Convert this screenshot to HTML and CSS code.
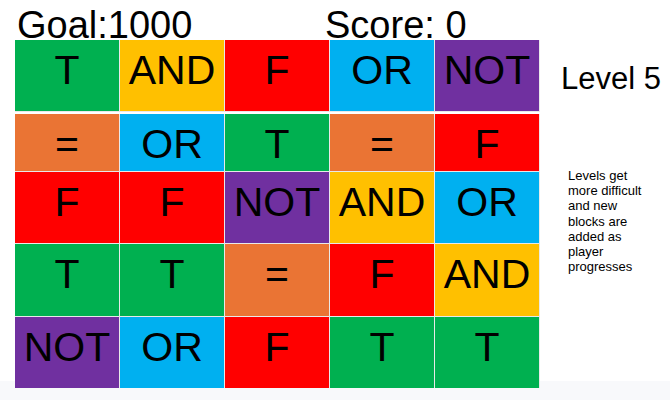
FILE: index.html
```html
<!DOCTYPE html>
<html>
<head>
<meta charset="utf-8">
<link rel="stylesheet" href="styles.css">
</head>
<body>
<div class="slide">
  <header class="header">
    <div class="goal">Goal:1000</div>
    <div class="score">Score: 0</div>
  </header>
  <div class="main">
    <div class="board">
      <div class="grid top-row">
        <div class="cell green">T</div>
        <div class="cell yellow">AND</div>
        <div class="cell red">F</div>
        <div class="cell blue">OR</div>
        <div class="cell purple">NOT</div>
      </div>
      <div class="grid lower">
        <div class="cell orange">=</div>
        <div class="cell blue">OR</div>
        <div class="cell green">T</div>
        <div class="cell orange">=</div>
        <div class="cell red">F</div>

        <div class="cell red">F</div>
        <div class="cell red">F</div>
        <div class="cell purple">NOT</div>
        <div class="cell yellow">AND</div>
        <div class="cell blue">OR</div>

        <div class="cell green">T</div>
        <div class="cell green">T</div>
        <div class="cell orange">=</div>
        <div class="cell red">F</div>
        <div class="cell yellow">AND</div>

        <div class="cell purple">NOT</div>
        <div class="cell blue">OR</div>
        <div class="cell red">F</div>
        <div class="cell green">T</div>
        <div class="cell green">T</div>
      </div>
    </div>
    <aside class="side">
      <div class="level">Level 5</div>
      <p class="note">Levels get more difficult and new blocks are added as player progresses</p>
    </aside>
  </div>
</div>
</body>
</html>
```
FILE: styles.css
```css
html {
  background: linear-gradient(to bottom, #ffffff 381px, #f8f9fb 381px) no-repeat;
  background-color: #f8f9fb;
  min-height: 400px;
}
body {
  margin: 0;
  font-family: "Liberation Sans", Arial, sans-serif;
  color: #000;
}
.slide {
  display: flex;
  flex-direction: column;
}
.header {
  display: grid;
  grid-template-columns: 308px auto;
  padding: 10px 0 0 17px;
  height: 30px;
  font-size: 38px;
  line-height: 31px;
}
.main {
  display: flex;
  padding-left: 15px;
}
.board {
  display: flex;
  flex-direction: column;
  gap: 2px;
  width: 525px;
}
.grid {
  display: grid;
  grid-template-columns: 104px 104px 104px 104px 104px;
  gap: 1px;
  background: #e9e9e9;
}
.top-row {
  grid-template-rows: 71px;
  padding-bottom: 1px;
}
.lower {
  grid-template-rows: 57px 71px 72px 71px;
}
.cell {
  font-size: 41px;
  line-height: 47px;
  padding-top: 7px;
  text-align: center;
  white-space: nowrap;
}
.green { background: #00b050; }
.yellow { background: #ffc000; }
.red { background: #ff0000; }
.blue { background: #00b0f0; }
.purple { background: #7030a0; }
.orange { background: #ea7434; }
.side {
  padding: 21px 0 0 21px;
  display: flex;
  flex-direction: column;
}
.level {
  font-size: 31px;
  line-height: 36px;
}
.note {
  margin: 71px 0 0 7px;
  width: 82px;
  font-size: 13px;
  line-height: 15.2px;
}
```
